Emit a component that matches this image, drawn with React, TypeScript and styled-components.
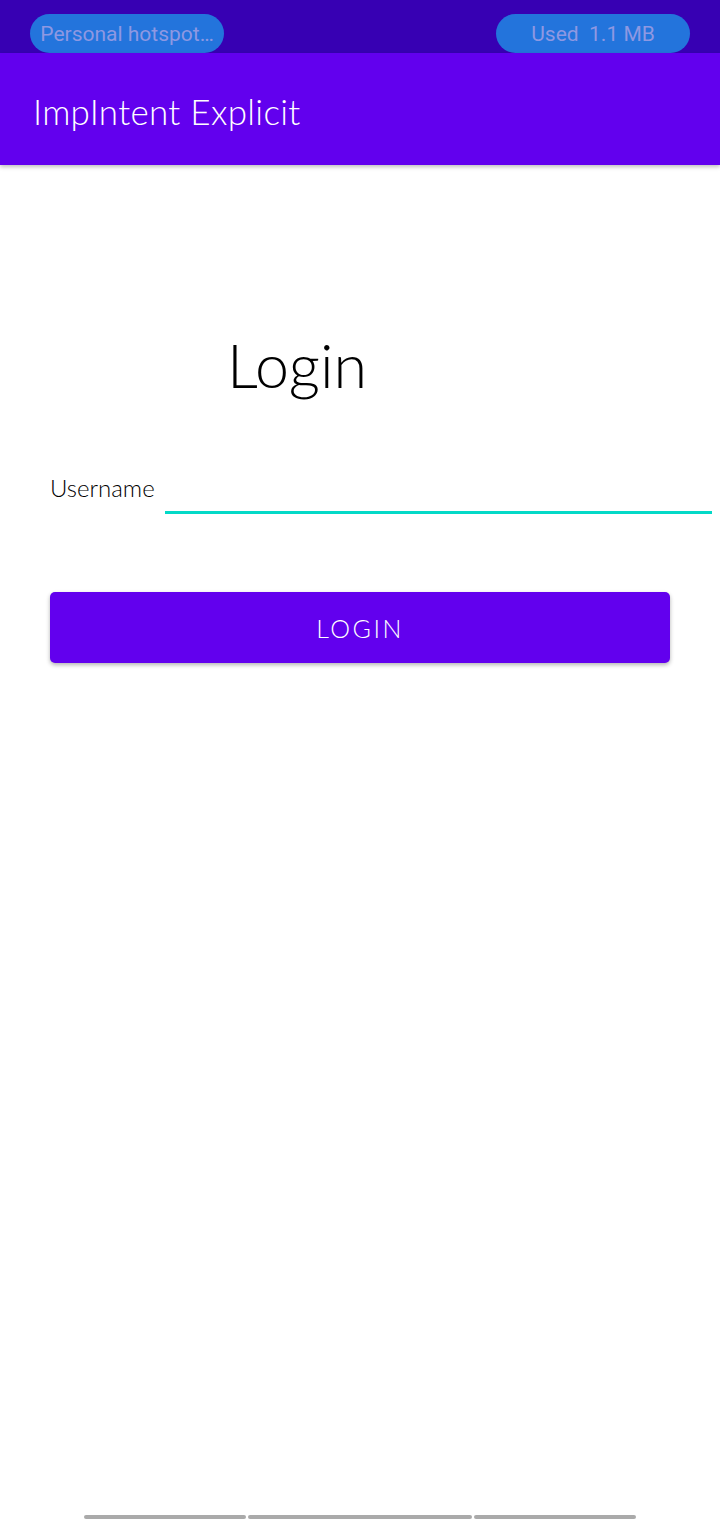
import styled, { createGlobalStyle } from "styled-components";

const GlobalStyle = createGlobalStyle`
	html, body {
		margin: 0;
		padding: 0;
		background: #ffffff;
	}
	body {
		font-family: "Lato", "Noto Sans", sans-serif;
	}
`;

const Screen = styled.div`
	position: relative;
	width: 720px;
	height: 1520px;
	display: flex;
	flex-direction: column;
	background: #ffffff;
	overflow: hidden;
`;

const StatusBar = styled.div`
	height: 53px;
	background: #3700b3;
	display: flex;
	justify-content: space-between;
	align-items: flex-end;
	padding: 0 30px;
	box-sizing: border-box;
`;

const Pill = styled.div<{ $width: number }>`
	width: ${(p) => p.$width}px;
	height: 39px;
	border-radius: 20px;
	background: #2374dc;
	color: #8e98e2;
	font-family: "Roboto", sans-serif;
	font-size: 21px;
	display: flex;
	align-items: center;
	justify-content: center;
	white-space: nowrap;
	overflow: hidden;
`;

const AppBar = styled.header`
	height: 112px;
	background: #6200ee;
	display: flex;
	align-items: center;
	padding-left: 33px;
	padding-top: 3px;
	box-sizing: border-box;
	box-shadow: 0 2px 4px rgba(0, 0, 0, 0.25);
	position: relative;
	z-index: 1;
`;

const AppTitle = styled.h1`
	margin: 0;
	color: #ffffff;
	font-family: "Lato", sans-serif;
	font-weight: 300;
	font-size: 35px;
	letter-spacing: 0.3px;
`;

const Content = styled.main`
	display: flex;
	flex-direction: column;
	padding: 164px 50px 0;
`;

const Heading = styled.h2`
	margin: 0 0 0 177px;
	font-family: "Lato", sans-serif;
	font-weight: 300;
	font-size: 61px;
	line-height: 72px;
	color: #000000;
`;

const FieldRow = styled.div`
	display: flex;
	align-items: flex-end;
	margin-top: 64px;
	margin-right: -42px;
`;

const Label = styled.label`
	font-size: 24px;
	font-weight: 300;
	color: #000000;
	padding-bottom: 12px;
	width: 115px;
`;

const Input = styled.input`
	flex: 1;
	height: 44px;
	border: none;
	border-bottom: 3px solid #03d9c7;
	outline: none;
	font-size: 22px;
	font-family: "Lato", sans-serif;
	background: transparent;
`;

const LoginButton = styled.button`
	margin-top: 78px;
	height: 71px;
	width: 620px;
	border: none;
	border-radius: 5px;
	background: #6200ee;
	color: #ffffff;
	font-family: "Lato", sans-serif;
	font-weight: 300;
	font-size: 25px;
	letter-spacing: 2.5px;
	box-shadow: 0 2px 4px rgba(0, 0, 0, 0.3);
	cursor: pointer;
`;

const NavBar = styled.div`
	position: absolute;
	bottom: 1px;
	left: 84px;
	display: flex;
	gap: 2px;
`;

const NavSegment = styled.div<{ $width: number }>`
	width: ${(p) => p.$width}px;
	height: 4px;
	background: #aaaaaa;
	border-radius: 2px;
`;

const App = () => {
	return (
		<>
			<GlobalStyle />
			<Screen>
				<StatusBar>
					<Pill $width={194}>Personal hotspot…</Pill>
					<Pill $width={194}>Used&nbsp; 1.1 MB</Pill>
				</StatusBar>
				<AppBar>
					<AppTitle>ImpIntent Explicit</AppTitle>
				</AppBar>
				<Content>
					<Heading>Login</Heading>
					<FieldRow>
						<Label htmlFor="username">Username</Label>
						<Input id="username" />
					</FieldRow>
					<LoginButton>LOGIN</LoginButton>
				</Content>
				<NavBar>
					<NavSegment $width={162} />
					<NavSegment $width={224} />
					<NavSegment $width={162} />
				</NavBar>
			</Screen>
		</>
	);
};

export default App;
